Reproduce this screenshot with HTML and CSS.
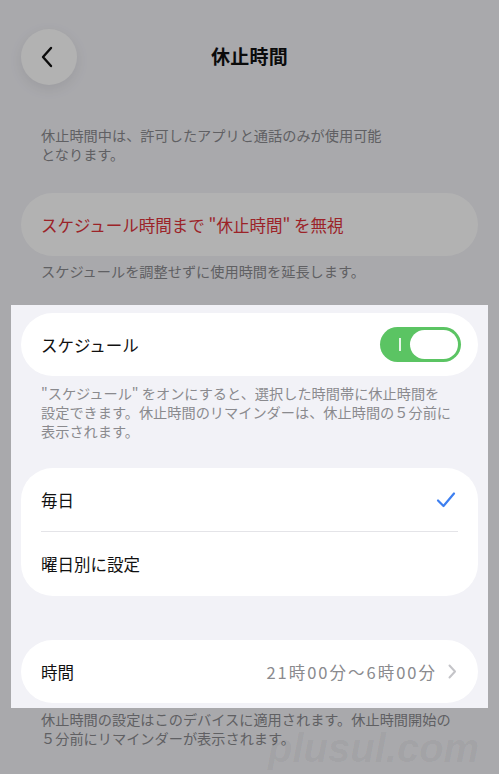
FILE: index.html
```html
<!DOCTYPE html>
<html lang="ja">

<head>
  <meta charset="UTF-8">
  <meta name="viewport" content="width=device-width, initial-scale=1.0">
  <title>休止時間</title>
  <link rel="stylesheet" href="styles.css">
</head>

<body>
  <div class="page">
    <header class="nav">
      <button class="back" aria-label="戻る">
        <svg width="14" height="22" viewBox="0 0 14 22">
          <path d="M11 2 L3 11 L11 20" fill="none" stroke="#111" stroke-width="2.4" stroke-linecap="round" stroke-linejoin="round" />
        </svg>
      </button>
      <h1 class="title">休止時間</h1>
    </header>

    <p class="note note-top">休止時間中は、許可したアプリと通話のみが使用可能<br>となります。</p>

    <div class="card">
      <div class="row row-danger">スケジュール時間まで "休止時間" を無視</div>
    </div>
    <p class="note note-tight">スケジュールを調整せずに使用時間を延長します。</p>

    <section class="spotlight">
      <div class="card">
        <div class="row">
          <span>スケジュール</span>
          <span class="toggle">
            <span class="toggle-mark"></span>
            <span class="toggle-knob"></span>
          </span>
        </div>
      </div>
      <p class="note">"スケジュール" をオンにすると、選択した時間帯に休止時間を<br>設定できます。休止時間のリマインダーは、休止時間の５分前に<br>表示されます。</p>

      <div class="card card-list">
        <div class="row">
          <span>毎日</span>
          <svg class="check" width="20" height="18" viewBox="0 0 20 18">
            <path d="M2 9.5 L7.5 15 L18 2.5" fill="none" stroke="#3d7ff0" stroke-width="2.2" stroke-linecap="round" stroke-linejoin="round" />
          </svg>
        </div>
        <div class="sep"></div>
        <div class="row">
          <span>曜日別に設定</span>
        </div>
      </div>

      <div class="card card-time">
        <div class="row">
          <span>時間</span>
          <span class="value">
            <span class="value-text">21時00分〜6時00分</span>
            <svg width="9" height="15" viewBox="0 0 9 15">
              <path d="M1.5 1.5 L7 7.5 L1.5 13.5" fill="none" stroke="#c4c4c8" stroke-width="2" stroke-linecap="round" stroke-linejoin="round" />
            </svg>
          </span>
        </div>
      </div>
    </section>

    <p class="note note-foot">休止時間の設定はこのデバイスに適用されます。休止時間開始の<br>５分前にリマインダーが表示されます。</p>

    <div class="watermark">plusul.com</div>
  </div>
</body>

</html>
```

FILE: styles.css
```css
html,
body {
  margin: 0;
  padding: 0;
  background: #f2f2f7;
}

body {
  width: 499px;
  height: 774px;
  overflow: hidden;
  font-family: "Noto Sans CJK JP", "Noto Sans", sans-serif;
  color: #111;
}

.page {
  position: relative;
  height: 774px;
  padding: 0 21px;
  box-sizing: border-box;
}

.nav {
  height: 56px;
  padding-top: 29px;
  display: flex;
  align-items: center;
  justify-content: center;
  position: relative;
}

.back {
  position: absolute;
  left: 0;
  top: 29px;
  width: 56px;
  height: 56px;
  border: 0;
  border-radius: 50%;
  background: #fff;
  box-shadow: 0 4px 14px rgba(0, 0, 0, 0.08);
  display: flex;
  align-items: center;
  justify-content: center;
  padding: 0 4px 0 0;
}

.title {
  margin: -3px 0 0;
  font-size: 19px;
  font-weight: 700;
  letter-spacing: 0.2px;
}

.note {
  margin: 8px 0 0;
  padding: 0 20px;
  font-size: 14.2px;
  line-height: 19px;
  white-space: nowrap;
  color: #8a8a8e;
}

.note-top {
  margin: 41px 0 29px;
}

.note-tight {
  margin: 6px 0 24px;
}

.note-foot {
  margin-top: 2px;
}

.card {
  background: #fff;
  border-radius: 32px;
}

.row {
  height: 63px;
  padding: 0 20px;
  display: flex;
  align-items: center;
  justify-content: space-between;
  font-size: 16.5px;
}

.row-danger {
  color: #e0333a;
}

.spotlight {
  position: relative;
  z-index: 1;
  margin: 0 -10px;
  padding: 8px 10px 5px;
  background: #f2f2f7;
  box-shadow: 0 0 0 1200px rgba(0, 0, 0, 0.3);
}

.toggle {
  position: relative;
  width: 81px;
  height: 35px;
  margin-right: -3px;
  border-radius: 18px;
  background: #5bc463;
}

.toggle-mark {
  position: absolute;
  left: 19px;
  top: 11px;
  width: 1.5px;
  height: 13px;
  background: rgba(255, 255, 255, 0.85);
}

.toggle-knob {
  position: absolute;
  right: 3px;
  top: 3px;
  width: 48px;
  height: 29px;
  border-radius: 15px;
  background: #fff;
}

.card-list {
  margin-top: 27px;
}

.card-list .row:last-child {
  height: 64px;
}

.sep {
  height: 1px;
  margin: 0 20px;
  background: #e4e4e8;
}

.check {
  margin-right: 2px;
}

.card-time {
  margin-top: 44px;
}

.value {
  display: flex;
  align-items: center;
  gap: 11px;
  color: #8a8a8e;
  margin-right: 1px;
}

.value-text {
  letter-spacing: 2px;
}

.watermark {
  position: absolute;
  left: 268px;
  top: 728px;
  font-family: "Liberation Sans", Arial, sans-serif;
  font-size: 40px;
  line-height: 1;
  font-weight: 700;
  font-style: italic;
  color: rgba(0, 0, 0, 0.045);
  z-index: 2;
}
```
